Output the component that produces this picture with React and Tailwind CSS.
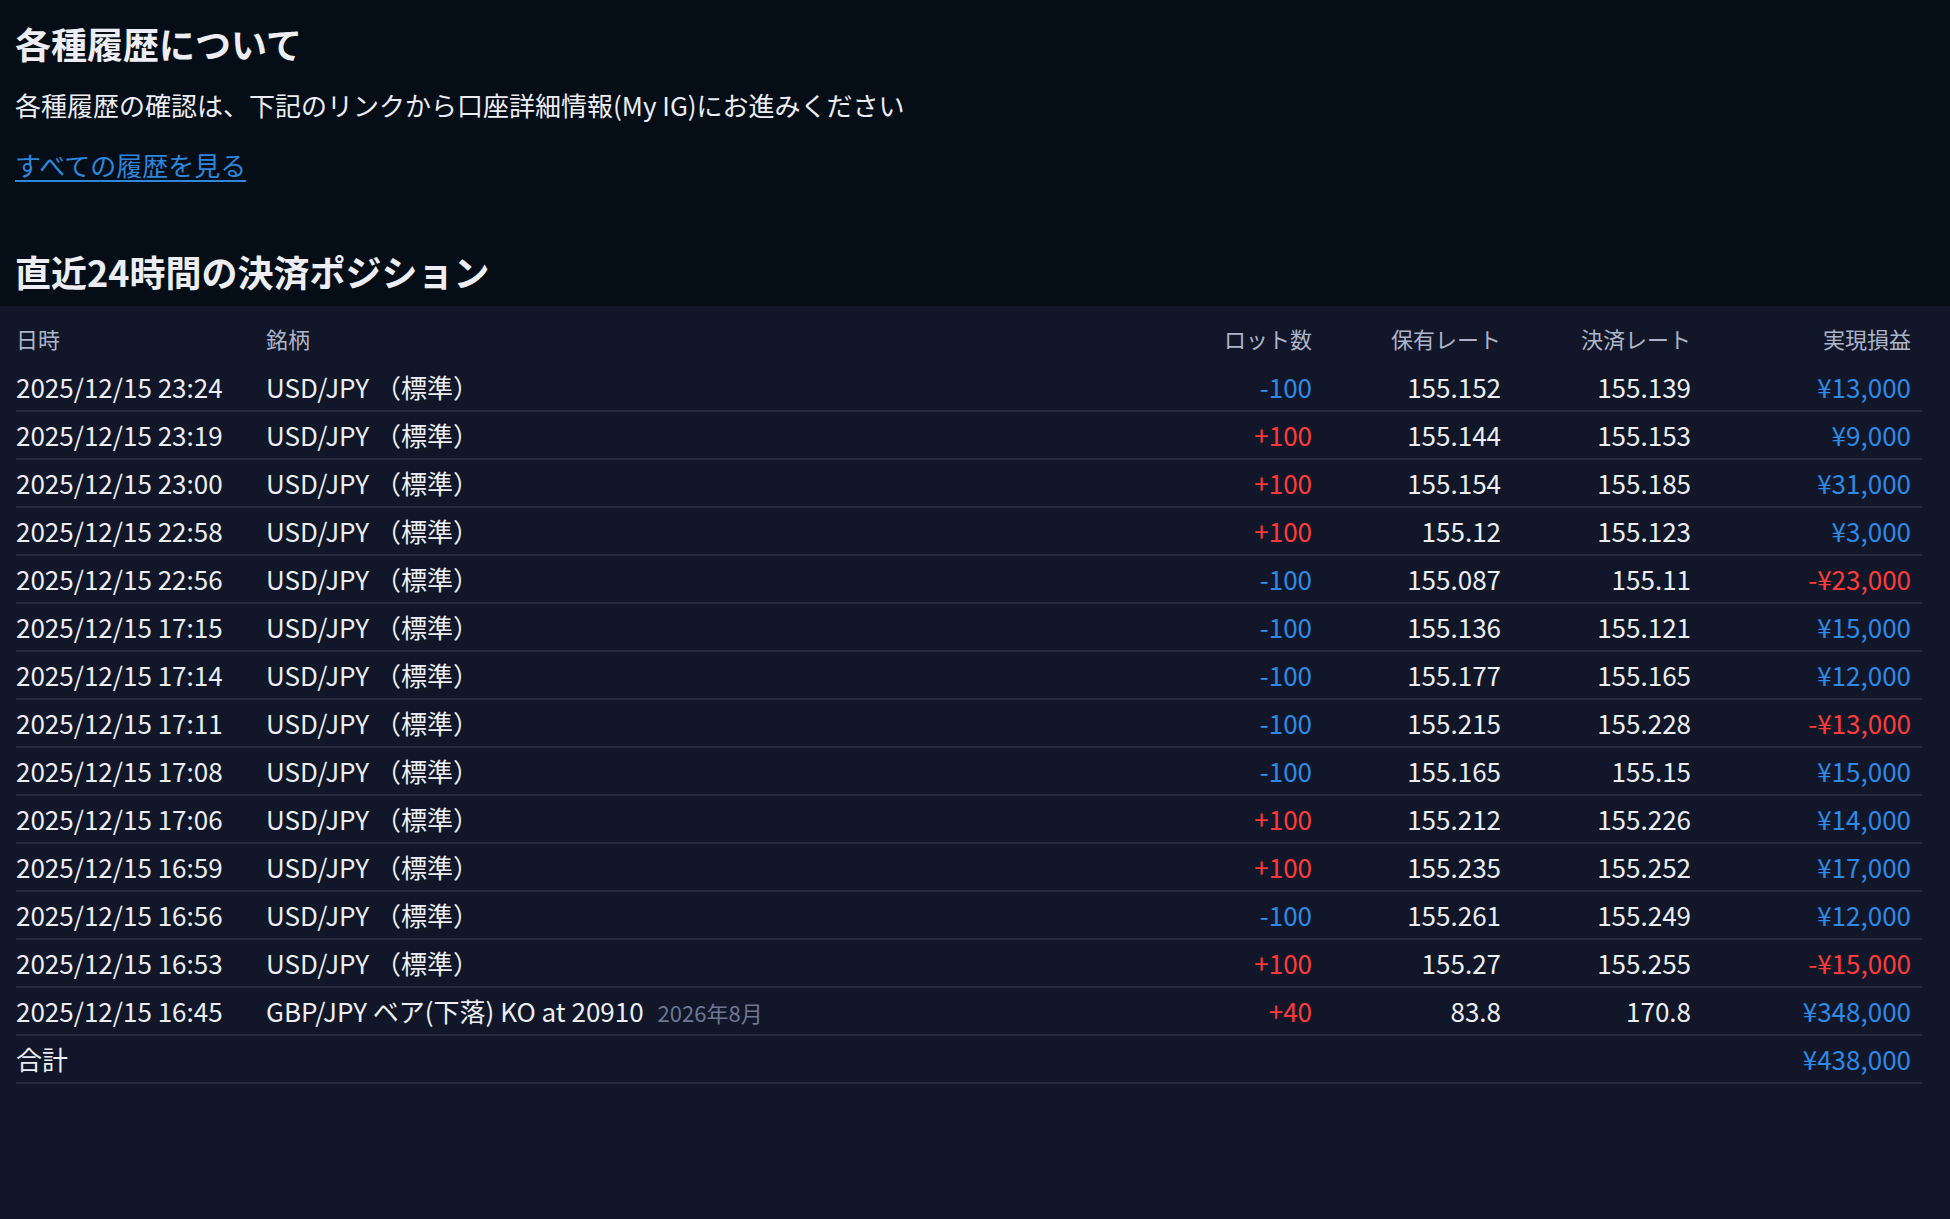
import React from 'react';

const rows = [
    { date: '2025/12/15 23:24', name: 'USD/JPY （標準）', lot: '-100', open: '155.152', close: '155.139', pnl: '¥13,000' },
    { date: '2025/12/15 23:19', name: 'USD/JPY （標準）', lot: '+100', open: '155.144', close: '155.153', pnl: '¥9,000' },
    { date: '2025/12/15 23:00', name: 'USD/JPY （標準）', lot: '+100', open: '155.154', close: '155.185', pnl: '¥31,000' },
    { date: '2025/12/15 22:58', name: 'USD/JPY （標準）', lot: '+100', open: '155.12', close: '155.123', pnl: '¥3,000' },
    { date: '2025/12/15 22:56', name: 'USD/JPY （標準）', lot: '-100', open: '155.087', close: '155.11', pnl: '-¥23,000' },
    { date: '2025/12/15 17:15', name: 'USD/JPY （標準）', lot: '-100', open: '155.136', close: '155.121', pnl: '¥15,000' },
    { date: '2025/12/15 17:14', name: 'USD/JPY （標準）', lot: '-100', open: '155.177', close: '155.165', pnl: '¥12,000' },
    { date: '2025/12/15 17:11', name: 'USD/JPY （標準）', lot: '-100', open: '155.215', close: '155.228', pnl: '-¥13,000' },
    { date: '2025/12/15 17:08', name: 'USD/JPY （標準）', lot: '-100', open: '155.165', close: '155.15', pnl: '¥15,000' },
    { date: '2025/12/15 17:06', name: 'USD/JPY （標準）', lot: '+100', open: '155.212', close: '155.226', pnl: '¥14,000' },
    { date: '2025/12/15 16:59', name: 'USD/JPY （標準）', lot: '+100', open: '155.235', close: '155.252', pnl: '¥17,000' },
    { date: '2025/12/15 16:56', name: 'USD/JPY （標準）', lot: '-100', open: '155.261', close: '155.249', pnl: '¥12,000' },
    { date: '2025/12/15 16:53', name: 'USD/JPY （標準）', lot: '+100', open: '155.27', close: '155.255', pnl: '-¥15,000' },
    { date: '2025/12/15 16:45', name: 'GBP/JPY ベア(下落) KO at 20910', sub: '2026年8月', lot: '+40', open: '83.8', close: '170.8', pnl: '¥348,000' },
];

const gridCols = "grid grid-cols-[250px_1fr_200px_189px_190px_231px] items-center";

const signColor = (v) => (v.startsWith('-') ? 'text-[#2d8ae5]' : 'text-[#ff3b3b]');
const pnlColor = (v) => (v.startsWith('-') ? 'text-[#ff3b3b]' : 'text-[#2d8ae5]');

const App = () => {

    const header = () => (
        <div className={`${gridCols} h-[48px] pb-[3px] text-[22px] text-[#aeb4c8]`}>
            <div>日時</div>
            <div>銘柄</div>
            <div className="text-right">ロット数</div>
            <div className="text-right">保有レート</div>
            <div className="text-right">決済レート</div>
            <div className="text-right pr-[11px]">実現損益</div>
        </div>
    )

    return (
        <div className="min-h-screen bg-[#111729] font-['Noto_Sans_CJK_JP',sans-serif] text-[#eceef3]">
            <div className="bg-[#050d17] px-[15px] pt-[17px] pb-[9px]">
                <h1 className="text-[36px] leading-[52px] font-bold">各種履歴について</h1>
                <p className="mt-[16px] text-[26px] leading-[40px]">各種履歴の確認は、下記のリンクから口座詳細情報(My IG)にお進みください</p>
                <a href="#" className="mt-[20px] inline-block text-[26px] leading-[40px] text-[#2d86db] underline underline-offset-4">すべての履歴を見る</a>
                <h2 className="mt-[60px] text-[36px] leading-[52px] font-bold">直近24時間の決済ポジション</h2>
            </div>

            <div className="pt-[10px] pl-[16px] pr-[28px]">
                {header()}
                {rows.map((r, index) => (
                    <div key={index} className={`${gridCols} h-[48px] pb-[2px] border-b-2 border-[#262b3c] text-[26px]`}>
                        <div className="whitespace-nowrap">{r.date}</div>
                        <div className="whitespace-nowrap">
                            {r.name}
                            {r.sub && <span className="ml-[14px] text-[22px] text-[#6f7795]">{r.sub}</span>}
                        </div>
                        <div className={`text-right ${signColor(r.lot)}`}>{r.lot}</div>
                        <div className="text-right">{r.open}</div>
                        <div className="text-right">{r.close}</div>
                        <div className={`text-right pr-[11px] ${pnlColor(r.pnl)}`}>{r.pnl}</div>
                    </div>
                ))}
                <div className={`${gridCols} h-[48px] pb-[2px] border-b-2 border-[#262b3c] text-[26px]`}>
                    <div>合計</div>
                    <div></div>
                    <div></div>
                    <div></div>
                    <div></div>
                    <div className="text-right pr-[11px] text-[#2d8ae5]">¥438,000</div>
                </div>
            </div>
        </div>
    )
}

export default App;
